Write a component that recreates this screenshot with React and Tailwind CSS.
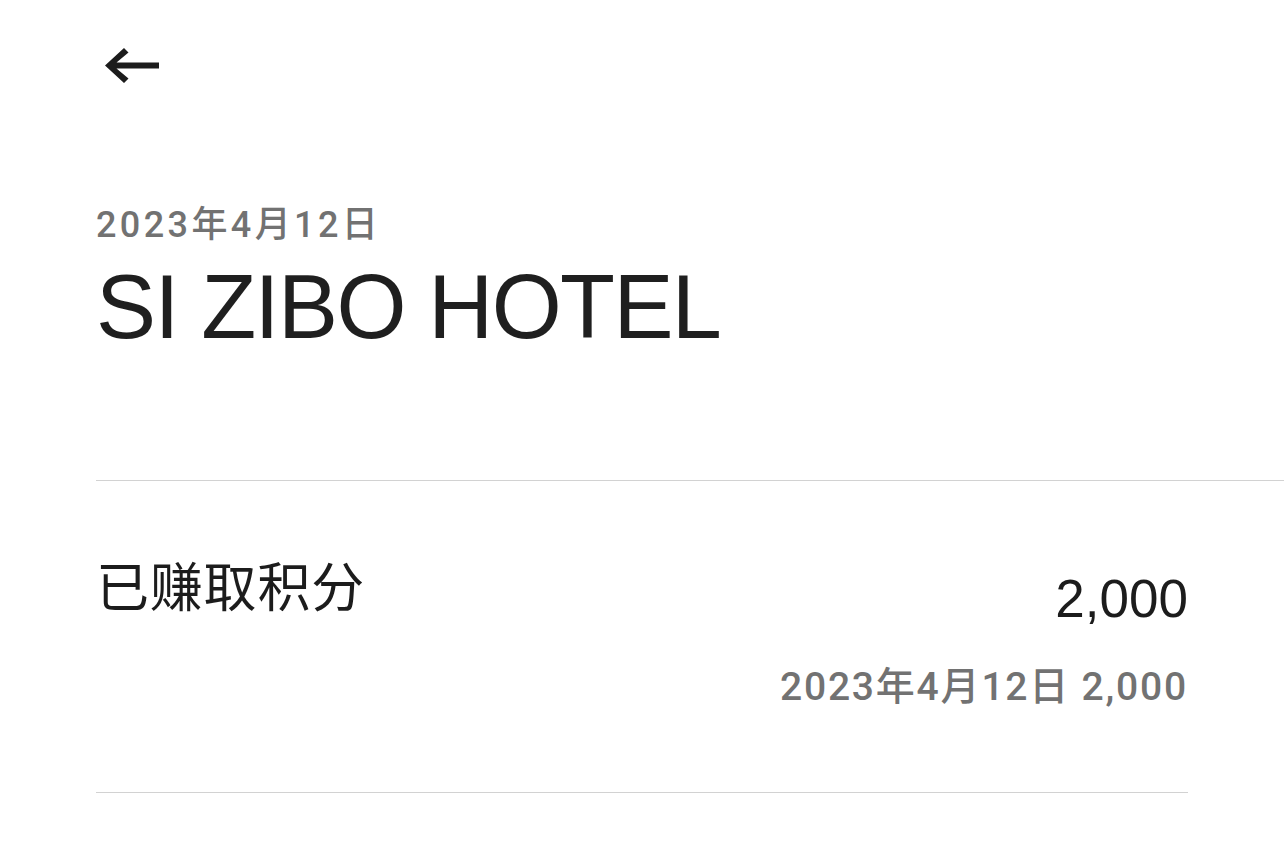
import React from 'react';

const SANS = {
  fontFamily: '"Liberation Sans", "Noto Sans CJK SC", sans-serif',
};

// drawn as a filled shape so the stroke weight matches the reference
function BackArrow() {
  return (
    <svg width="56" height="36" viewBox="0 0 56 36" className="block shrink-0">
      <path
        fill="#1c1c1c"
        d="M20 0L24.5 4.5L12.5 14.5H55V20.5H12.5L24.5 30.5L20 35L1 17.5Z"
      />
    </svg>
  );
}

export default function App() {
  return (
    <div className="min-h-screen w-full bg-white pl-[96px]" style={SANS}>
      {/* Header */}
      <div className="pt-[48px]">
        <div className="ml-[8px] flex h-[36px] w-[56px] cursor-pointer" aria-label="返回">
          <BackArrow />
        </div>
      </div>

      <div className="mt-[123px] font-['Roboto','Noto_Sans_CJK_SC',sans-serif] text-[36px] leading-none font-medium tracking-[3.4px] text-[#727272]">
        2023年4月12日
      </div>
      <h1 className="mt-[19px] text-[90px] leading-none font-normal tracking-[-1.6px] text-[#1f1f1f]">
        SI ZIBO HOTEL
      </h1>

      <div className="mt-[128px] border-t border-[#d2d2d2]" />

      {/* Points row */}
      <div className="w-[1092px]">
        <div className="mt-[81px] flex items-start justify-between">
          <div className="text-[53px] leading-none tracking-[0.8px] text-[#1c1c1c]">已赚取积分</div>
          <div className="mt-[10px] flex flex-col items-end">
            <div className="text-[53px] leading-none text-[#1c1c1c]">2,000</div>
            <div className="mt-[43px] font-['Roboto','Noto_Sans_CJK_SC',sans-serif] text-[39px] leading-none font-medium tracking-[1.8px] text-[#727272]">
              2023年4月12日 2,000
            </div>
          </div>
        </div>

        <div className="mt-[85px] border-t border-[#d2d2d2]" />
      </div>
    </div>
  );
}
